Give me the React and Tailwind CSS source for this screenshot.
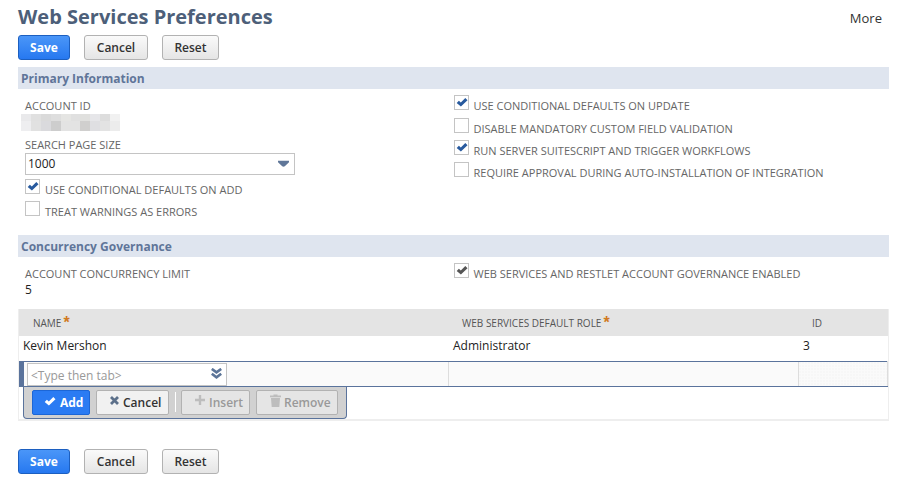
import React from 'react';

const MOSAIC = [
  ['bg-[#e9e9eb]', 'bg-[#e0e0e0]', 'bg-[#dadada]', 'bg-[#dedede]', 'bg-[#e5e5e3]', 'bg-[#e0e0e0]', 'bg-[#e0e0de]', 'bg-[#e6e6e9]', 'bg-[#dddddd]', 'bg-[#f1f1f1]'],
  ['bg-[#eeeef0]', 'bg-[#e1e1e1]', 'bg-[#dadadd]', 'bg-[#cdcdcd]', 'bg-[#e3e3e3]', 'bg-[#e3e3e3]', 'bg-[#d0cfce]', 'bg-[#dfdfe2]', 'bg-[#e3e3e3]', 'bg-[#ececec]'],
];

function ActionButton({ primary, className, children }) {
  const tone = primary
    ? 'border-[#1c5fc0] bg-linear-to-b from-[#4a96f8] to-[#2678f0] font-bold text-white'
    : 'border-[#b2b2b2] bg-linear-to-b from-[#fafafa] to-[#e5e5e5] font-semibold text-[#333333]';
  return (
    <button type="button" className={`h-[25px] rounded-[3px] border text-center text-[12px] leading-[23px] ${tone} ${className}`}>
      {children}
    </button>
  );
}

function FormActions() {
  return (
    <div className="flex gap-[14px]">
      <ActionButton primary className="w-[52px]">Save</ActionButton>
      <ActionButton className="w-16">Cancel</ActionButton>
      <ActionButton className="w-[57px]">Reset</ActionButton>
    </div>
  );
}

function SectionTitle({ children }) {
  return (
    <h2 className="h-[22px] bg-[#dfe5ef] pl-[3px] text-[12px] leading-[23px] font-bold text-[#5f7599]">{children}</h2>
  );
}

function CheckGlyph({ className }) {
  return (
    <svg viewBox="0 0 12 12" aria-hidden="true" className={className}>
      <path d="M0.7 5.9 2.9 3.7 4.8 5.5 9.3 1 11.5 3.2 4.9 9.5Z" fill="currentColor" />
    </svg>
  );
}

function CheckField({ id, label, checked = false, disabled = false }) {
  return (
    <div className="flex h-[22px] items-start gap-[5px]">
      <span className="relative block size-[15px] shrink-0">
        <input
          id={id}
          type="checkbox"
          defaultChecked={checked}
          disabled={disabled}
          className="peer block size-[15px] appearance-none border border-[#c4c4c4] bg-white"
        />
        <CheckGlyph
          className={`pointer-events-none absolute top-0.5 left-0.5 hidden size-3 peer-checked:block ${disabled ? 'text-[#555555]' : 'text-[#285a9e]'}`}
        />
      </span>
      <label htmlFor={id} className="pt-[3px] text-[11px] leading-4 whitespace-nowrap text-[#666666]">
        {label}
      </label>
    </div>
  );
}

function HeaderCell({ required, children }) {
  return (
    <th scope="col" className="h-[27px] pl-[14px] text-left text-[10px] font-normal text-[#555555]">
      <span className="flex items-center gap-0.5 leading-4">
        <span>{children}</span>
        {required && <span className="h-4 font-['Liberation_Sans',sans-serif] text-[16px] leading-4 font-bold text-[#d17a22]">*</span>}
      </span>
    </th>
  );
}

function RowButton({ tone, className, icon, children, disabled }) {
  return (
    <button
      type="button"
      disabled={disabled}
      className={`flex h-[25px] items-center rounded-[2px] border text-[12px] leading-4 ${tone} ${className}`}
    >
      {icon}
      <span className="pt-0.5">{children}</span>
    </button>
  );
}

export default function App() {
  return (
    <main className="bg-white px-[18px] pt-1 pb-[9px] font-['Open_Sans','Noto_Sans',sans-serif] text-[12px] text-[#222222]">
      <header className="flex items-start justify-between">
        <h1 className="text-[20px] leading-[26px] font-bold text-[#4d5f79]">Web Services Preferences</h1>
        <a href="#more" className="pt-1.5 pr-[7px] text-[13px] leading-4 text-[#333333]">More</a>
      </header>
      <div className="pt-[5px] pb-[7px]">
        <FormActions />
      </div>

      <section>
        <SectionTitle>Primary Information</SectionTitle>
        <div className="grid grid-cols-2 pb-3">
          <div className="pt-[9px] pl-[7px]">
            <div className="text-[11px] leading-4 text-[#666666]">ACCOUNT ID</div>
            <div className="-ml-1 flex w-[99px] flex-col" aria-hidden="true">
              {MOSAIC.map((row, y) => (
                <div key={y} className="flex">
                  {row.map((color, x) => (
                    <span key={x} className={`flex-1 ${y ? 'h-[10px]' : 'h-[7px]'} ${color}`} />
                  ))}
                </div>
              ))}
            </div>
            <label htmlFor="page-size" className="block pt-[6px] text-[11px] leading-4 text-[#666666]">SEARCH PAGE SIZE</label>
            <div className="relative w-[270px]">
              <select
                id="page-size"
                defaultValue="1000"
                className="block h-[22px] w-full appearance-none border border-[#c4c4c4] bg-white pl-0.5 text-[12px] leading-5 text-[#222222]"
              >
                <option>50</option>
                <option>500</option>
                <option>1000</option>
              </select>
              <svg viewBox="0 0 11 7" aria-hidden="true" className="pointer-events-none absolute top-[7px] right-[6px] h-[7px] w-[11px]">
                <path d="M0 0.8H11V2.3L6.8 6.3Q5.5 7 4.2 6.3L0 2.3Z" fill="#607799" />
              </svg>
            </div>
            <div className="pt-1">
              <CheckField id="defaults-add" label="USE CONDITIONAL DEFAULTS ON ADD" checked />
              <CheckField id="warnings" label="TREAT WARNINGS AS ERRORS" />
            </div>
          </div>
          <div className="pt-[6px]">
            <div className="pb-px">
              <CheckField id="defaults-update" label="USE CONDITIONAL DEFAULTS ON UPDATE" checked />
            </div>
            <CheckField id="mandatory" label="DISABLE MANDATORY CUSTOM FIELD VALIDATION" />
            <CheckField id="suitescript" label="RUN SERVER SUITESCRIPT AND TRIGGER WORKFLOWS" checked />
            <CheckField id="approval" label="REQUIRE APPROVAL DURING AUTO-INSTALLATION OF INTEGRATION" />
          </div>
        </div>
      </section>

      <section>
        <SectionTitle>Concurrency Governance</SectionTitle>
        <div className="grid grid-cols-2 pb-[11px]">
          <div className="pt-[9px] pl-[7px]">
            <div className="text-[11px] leading-4 text-[#666666]">ACCOUNT CONCURRENCY LIMIT</div>
            <div className="text-[12px] leading-4">5</div>
          </div>
          <div className="pt-[6px]">
            <CheckField id="governance" label="WEB SERVICES AND RESTLET ACCOUNT GOVERNANCE ENABLED" checked disabled />
          </div>
        </div>
      </section>

      <section className="border-x border-b-2 border-[#eeeeee]">
        <table className="w-full table-fixed border-collapse">
          <colgroup>
            <col className="w-[49.4%]" />
            <col className="w-[40.3%]" />
            <col />
          </colgroup>
          <thead className="bg-[#e4e4e4]">
            <tr>
              <HeaderCell required>NAME</HeaderCell>
              <HeaderCell required>WEB SERVICES DEFAULT ROLE</HeaderCell>
              <HeaderCell>ID</HeaderCell>
            </tr>
          </thead>
          <tbody>
            <tr className="h-[25px] text-[12px] leading-4">
              <td className="pb-[5px] pl-1">Kevin Mershon</td>
              <td className="pb-[5px] pl-[5px]">Administrator</td>
              <td className="pb-[5px] pl-[5px]">3</td>
            </tr>
            <tr className="bg-[#fafafa]">
              <td className="border-y border-y-[#5a739c] p-0">
                <div className="flex h-6 border-l-5 border-[#5a739c] pt-px pl-[3px]">
                  <div className="relative h-[23px] w-[200px]">
                    <input
                      type="text"
                      aria-label="Name"
                      placeholder="<Type then tab>"
                      className="block h-[23px] w-full border border-[#c4c4c4] bg-white pt-0.5 pl-[3px] text-[12px] text-[#222222] placeholder:text-[#999999]"
                    />
                    <svg viewBox="0 0 11 11" aria-hidden="true" className="pointer-events-none absolute top-[5px] right-[5px] size-[11px]" fill="none" stroke="#5c7598" strokeWidth="2.6">
                      <path d="M0.8 0.9 5.5 4.3 10.2 0.9M0.8 5.7 5.5 9.3 10.2 5.7" />
                    </svg>
                  </div>
                </div>
              </td>
              <td className="border-y border-l border-y-[#5a739c] border-l-[#dddddd] p-0" />
              <td className="border border-x-[#dddddd] border-y-[#5a739c] bg-[radial-gradient(#eeeeee_1px,transparent_1px)] bg-size-[3px_3px] p-0" />
            </tr>
          </tbody>
        </table>
        <div className="ml-1 flex h-[32px] w-[324px] items-start rounded-b-[4px] border border-t-0 border-[#5a739c] bg-[#d1d1d1] pt-[3px] pl-2">
          <RowButton
            tone="border-[#1c66d6] bg-[#2a7bf3] font-bold text-white"
            className="w-[58px] gap-1 pl-[11px]"
            icon={<CheckGlyph className="size-3" />}
          >
            Add
          </RowButton>
          <RowButton
            tone="border-[#b2b2b2] bg-[#f1f1f1] font-semibold text-[#333333]"
            className="ml-1.5 w-[73px] gap-1 pl-[13px]"
            icon={
              <svg viewBox="0 0 9 9" aria-hidden="true" className="mb-1 size-[9px]" stroke="#5c708a" strokeWidth="2.8">
                <path d="M1 1 8 8M8 1 1 8" />
              </svg>
            }
          >
            Cancel
          </RowButton>
          <span className="mt-0.5 ml-1.5 h-5 w-px bg-white" />
          <RowButton
            disabled
            tone="border-[#b2b2b2] bg-[#e5e5e5] font-semibold text-[#999999]"
            className="ml-[5px] w-[69px] gap-1 pl-[13px]"
            icon={
              <svg viewBox="0 0 10 10" aria-hidden="true" className="mb-1 size-[10px]" stroke="#bdbdbd" strokeWidth="2.4">
                <path d="M5 0V10M0 5H10" />
              </svg>
            }
          >
            Insert
          </RowButton>
          <RowButton
            disabled
            tone="border-[#b2b2b2] bg-[#e5e5e5] font-semibold text-[#999999]"
            className="ml-1.5 w-[82px] gap-[3px] pl-[13px]"
            icon={
              <svg viewBox="0 0 11 13" aria-hidden="true" className="mb-1 h-[13px] w-[11px]" fill="#bdbdbd">
                <path d="M3.5 0.5H7.5V1.5H11V3.2H0V1.5H3.5ZM1 4H10L9.3 13H1.7Z" />
              </svg>
            }
          >
            Remove
          </RowButton>
        </div>
      </section>

      <div className="pt-7">
        <FormActions />
      </div>
    </main>
  );
}
